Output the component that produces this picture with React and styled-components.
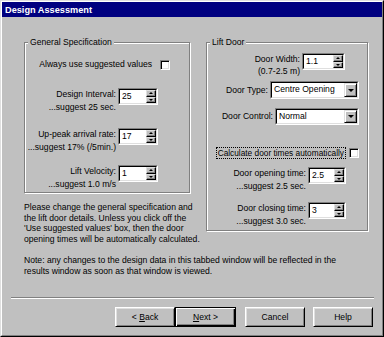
import React from "react";
import styled, { createGlobalStyle } from "styled-components";

const GlobalStyle = createGlobalStyle`
  html, body {
    margin: 0;
    padding: 0;
    background: #c0c0c0;
  }
  body {
    font-family: "Liberation Sans", Arial, sans-serif;
    font-size: 8.6px;
    color: #000;
  }
`;

const SpinBox = ({ value, w = 40 }) => (
  <Field $w={w} $h={17}>
    <FieldInner>
      <FieldText>{value}</FieldText>
      <Spin>
        <SpinBtn>
          <Arrow $dir="up" />
        </SpinBtn>
        <SpinBtn>
          <Arrow $dir="down" />
        </SpinBtn>
      </Spin>
    </FieldInner>
  </Field>
);

const Select = ({ value, w, h = 18 }) => (
  <Field $w={w} $h={h}>
    <FieldInner>
      <FieldText>{value}</FieldText>
      <DropBtn>
        <Arrow $dir="down" $big />
      </DropBtn>
    </FieldInner>
  </Field>
);

const App = () => {
  return (
    <>
      <GlobalStyle />
      <Window>
        <Inner>
          <TitleBar>Design Assessment</TitleBar>
          <Body>
            <Columns>
              <LeftCol>
                <GroupBox $w={166} $h={151}>
                  <Legend>General Specification</Legend>
                  <Row $mt={16} $pr={19} $align="center">
                    <Label $single>Always use suggested values</Label>
                    <CheckBox $gap={6} />
                  </Row>
                  <Row $mt={18} $pr={31}>
                    <Label>
                      Design Interval:
                      <br />
                      ...suggest 25 sec.
                    </Label>
                    <SpinBox value="25" />
                  </Row>
                  <Row $mt={15} $pr={31}>
                    <Label>
                      Up-peak arrival rate:
                      <br />
                      ...suggest 17% (/5min.)
                    </Label>
                    <SpinBox value="17" />
                  </Row>
                  <Row $mt={12} $pr={31}>
                    <Label>
                      Lift Velocity:
                      <br />
                      ...suggest 1.0 m/s
                    </Label>
                    <SpinBox value="1" />
                  </Row>
                </GroupBox>
                <Para>
                  Please change the general specification and
                  <br />
                  the lift door details. Unless you click off the
                  <br />
                  'Use suggested values' box, then the door
                  <br />
                  opening times will be automatically calculated.
                </Para>
              </LeftCol>
              <GroupBox $w={162} $h={189}>
                <Legend>Lift Door</Legend>
                <Row $mt={10} $pr={22}>
                  <Label $tight>
                    Door Width:
                    <br />
                    (0.7-2.5 m)
                  </Label>
                  <SpinBox value="1.1" w={43} />
                </Row>
                <Row $mt={4} $pr={8} $align="center">
                  <Label $single>Door Type:</Label>
                  <Select value="Centre Opening" w={89} />
                </Row>
                <Row $mt={9} $pr={8} $align="center">
                  <Label $single>Door Control:</Label>
                  <Select value="Normal" w={84} h={17} />
                </Row>
                <Row $mt={22} $pr={8} $align="center">
                  <Focus>Calculate door times automatically</Focus>
                  <CheckBox $gap={3} />
                </Row>
                <Row $mt={8} $pr={21}>
                  <Label>
                    Door opening time:
                    <br />
                    ...suggest 2.5 sec.
                  </Label>
                  <SpinBox value="2.5" w={38} />
                </Row>
                <Row $mt={10} $pr={21}>
                  <Label>
                    Door closing time:
                    <br />
                    ...suggest 3.0 sec.
                  </Label>
                  <SpinBox value="3" w={38} />
                </Row>
              </GroupBox>
            </Columns>
            <Note>
              Note: any changes to the design data in this tabbed window will be reflected in the
              <br />
              results window as soon as that window is viewed.
            </Note>
            <Separator />
            <ButtonRow>
              <Button>
                &lt; <u>B</u>ack
              </Button>
              <Button $default>
                <u>N</u>ext &gt;
              </Button>
              <Button $ml={9}>Cancel</Button>
              <Button $ml={8}>Help</Button>
            </ButtonRow>
          </Body>
        </Inner>
      </Window>
    </>
  );
};
export default App;

const Window = styled.div`
  width: 384px;
  height: 337px;
  box-sizing: border-box;
  border: 1px solid;
  border-color: #dfdfdf #000 #000 #dfdfdf;
  background: #c0c0c0;
  display: flex;
  flex-direction: column;
`;

const Inner = styled.div`
  flex: 1;
  border: 1px solid;
  border-color: #fff #808080 #808080 #fff;
  display: flex;
  flex-direction: column;
`;

const TitleBar = styled.div`
  height: 15px;
  background: #000080;
  color: #fff;
  font-weight: bold;
  font-size: 9.2px;
  padding-left: 3px;
  display: flex;
  align-items: center;
`;

const Body = styled.div`
  padding-top: 25px;
  display: flex;
  flex-direction: column;
`;

const Columns = styled.div`
  display: flex;
  align-items: flex-start;
  gap: 16px;
  margin-left: 22px;
`;

const LeftCol = styled.div`
  width: 166px;
  display: flex;
  flex-direction: column;
`;

const GroupBox = styled.div`
  position: relative;
  box-sizing: border-box;
  width: ${(p) => p.$w}px;
  height: ${(p) => p.$h}px;
  border: 1px solid #808080;
  box-shadow: inset 1px 1px #fff, 1px 1px #fff;
  display: flex;
  flex-direction: column;
`;

const Legend = styled.div`
  position: absolute;
  top: -6px;
  left: 3px;
  padding: 0 2px;
  background: #c0c0c0;
  line-height: 11px;
  white-space: nowrap;
`;

const Row = styled.div`
  display: flex;
  justify-content: flex-end;
  align-items: ${(p) => p.$align || "flex-start"};
  margin-top: ${(p) => p.$mt || 0}px;
  padding-right: ${(p) => p.$pr || 0}px;
`;

const Label = styled.div`
  text-align: right;
  white-space: nowrap;
  line-height: ${(p) => (p.$single ? "11px" : p.$tight ? "11.5px" : "12.5px")};
  margin-right: 2px;
  padding-top: ${(p) => (p.$tight ? 1 : 0)}px;
`;

const Field = styled.div`
  width: ${(p) => p.$w}px;
  height: ${(p) => p.$h}px;
  box-sizing: border-box;
  border: 1px solid;
  border-color: #808080 #fff #fff #808080;
  display: flex;
  flex-shrink: 0;
`;

const FieldInner = styled.div`
  flex: 1;
  display: flex;
  border: 1px solid;
  border-color: #000 #dfdfdf #dfdfdf #000;
  background: #fff;
`;

const FieldText = styled.div`
  flex: 1;
  padding: 1px 0 0 2px;
  line-height: 11px;
  white-space: nowrap;
  overflow: hidden;
`;

const Spin = styled.div`
  width: 10px;
  display: flex;
  flex-direction: column;
`;

const SpinBtn = styled.div`
  flex: 1;
  box-sizing: border-box;
  background: #c0c0c0;
  border: 1px solid;
  border-color: #dfdfdf #000 #000 #dfdfdf;
  box-shadow: inset -1px -1px #808080;
  display: flex;
  align-items: center;
  justify-content: center;
`;

const DropBtn = styled.div`
  width: 13px;
  box-sizing: border-box;
  background: #c0c0c0;
  border: 1px solid;
  border-color: #dfdfdf #000 #000 #dfdfdf;
  box-shadow: inset 1px 1px #fff, inset -1px -1px #808080;
  display: flex;
  align-items: center;
  justify-content: center;
`;

const Arrow = styled.span`
  width: 0;
  height: 0;
  border-left: ${(p) => (p.$big ? 3 : 2)}px solid transparent;
  border-right: ${(p) => (p.$big ? 3 : 2)}px solid transparent;
  ${(p) =>
    p.$dir === "up"
      ? `border-bottom: 2px solid #000;`
      : `border-top: ${p.$big ? 3 : 2}px solid #000;`}
`;

const CheckBox = styled.div`
  width: 10px;
  height: 10px;
  box-sizing: border-box;
  margin-left: ${(p) => p.$gap || 0}px;
  background: #fff;
  border: 1px solid;
  border-color: #808080 #fff #fff #808080;
  box-shadow: inset 1px 1px #000, inset -1px -1px #dfdfdf;
  flex-shrink: 0;
`;

const Focus = styled.div`
  border: 1px dotted #000;
  padding: 0 1px;
  font-size: 8.3px;
  line-height: 10px;
  white-space: nowrap;
`;

const Para = styled.div`
  margin-top: 9px;
  line-height: 10.7px;
  white-space: nowrap;
`;

const Note = styled.div`
  margin: 10px 0 0 22px;
  line-height: 10.7px;
  white-space: nowrap;
`;

const Separator = styled.div`
  height: 0;
  border-top: 1px solid #808080;
  border-bottom: 1px solid #fff;
  margin: 21px 8px 0 9px;
`;

const ButtonRow = styled.div`
  display: flex;
  margin-top: 8px;
  padding-left: 113px;
`;

const Button = styled.button`
  width: ${(p) => (p.$default ? 61 : 60)}px;
  height: 20px;
  box-sizing: border-box;
  margin: 0 0 0 ${(p) => p.$ml || 0}px;
  padding: 0;
  font: inherit;
  color: #000;
  background: #c0c0c0;
  border: 1px solid;
  border-color: ${(p) => (p.$default ? "#000" : "#fff #000 #000 #fff")};
  box-shadow: ${(p) =>
    p.$default
      ? "inset 1px 1px #fff, inset -1px -1px #000, inset -2px -2px #808080"
      : "inset 1px 1px #dfdfdf, inset -1px -1px #808080"};
  u {
    text-decoration: underline;
  }
`;
